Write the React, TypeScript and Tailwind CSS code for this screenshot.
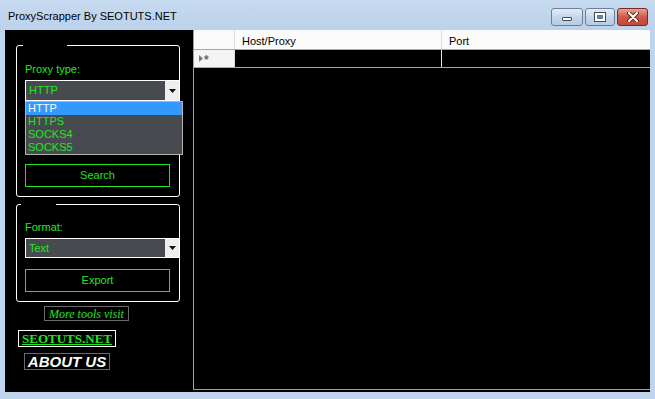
import React from "react";

const green = "text-[#22e622]";

function WinButtons() {
  return (
    <div className="ml-auto mr-[7px] mt-[8px] flex gap-[2px]">
      {/* minimize */}
      <div className="w-[32px] h-[18px] rounded-[3px] border border-[#6d7f96] bg-gradient-to-b from-[#e3ecf7] via-[#c6d6ea] to-[#b6cbe4] flex items-end justify-center pb-[4px]">
        <div className="w-[10px] h-[4px] bg-white border border-[#3c4a5c] rounded-[1px]" />
      </div>
      {/* maximize */}
      <div className="w-[30px] h-[18px] rounded-[3px] border border-[#6d7f96] bg-gradient-to-b from-[#e3ecf7] via-[#c6d6ea] to-[#b6cbe4] flex items-center justify-center">
        <div className="w-[10px] h-[8px] border-[2px] border-white outline outline-1 outline-[#3c4a5c] bg-[#6d7f96]" />
      </div>
      {/* close */}
      <div className="w-[31px] h-[18px] rounded-[3px] border border-[#7a2a22] bg-gradient-to-b from-[#e8a493] via-[#d0584a] to-[#c24a3a] flex items-center justify-center">
        <svg width="12" height="10" viewBox="0 0 12 10">
          <path d="M2 1 L10 9 M10 1 L2 9" stroke="#5a1f18" strokeWidth="4" strokeLinecap="round" />
          <path d="M2 1 L10 9 M10 1 L2 9" stroke="#ffffff" strokeWidth="2.2" strokeLinecap="round" />
        </svg>
      </div>
    </div>
  );
}

function Combo({ value, h, open }: { value: string; h: string; open?: boolean }) {
  return (
    <div className={`relative w-[155px] ${h} border border-white bg-[#474b4f] flex items-stretch`}>
      <span className={`flex-1 pl-[3px] text-[11px] flex items-center ${green}`}>{value}</span>
      <div className="w-[14px] bg-[#eeeeee] flex items-center justify-center">
        <svg width="7" height="4" viewBox="0 0 7 4">
          <path d="M0 0 H7 L3.5 4 Z" fill="#111" />
        </svg>
      </div>
      {open && (
        <div className="absolute left-[-1px] top-[20px] w-[158px] h-[54px] border border-[#b4b4b4] bg-[#474b4f] flex flex-col z-10">
          <div className="h-[13px] leading-[13px] text-[11px] pl-[2px] bg-[#3399ff] text-white">HTTP</div>
          <div className={`h-[13px] leading-[13px] text-[11px] pl-[2px] ${green}`}>HTTPS</div>
          <div className={`h-[13px] leading-[13px] text-[11px] pl-[2px] ${green}`}>SOCKS4</div>
          <div className={`h-[13px] leading-[13px] text-[11px] pl-[2px] ${green}`}>SOCKS5</div>
        </div>
      )}
    </div>
  );
}

function GreenButton({ label, mt }: { label: string; mt: string }) {
  return (
    <div className={`${mt} w-[145px] h-[23px] border border-[#1ee61e] bg-black flex items-center justify-center text-[11px] ${green}`}>
      {label}
    </div>
  );
}

function LeftPanel() {
  return (
    <div className="w-[188px] shrink-0 pl-[11px] pt-[15px] flex flex-col items-start">
      {/* proxy type group */}
      <div className="relative w-[164px] h-[152px] border border-white rounded-[3px] pl-[8px] pt-[17px] flex flex-col">
        <span className="absolute top-[-1px] left-[6px] w-[44px] h-[1px] bg-black" />
        <span className={`text-[11px] leading-[13px] ${green}`}>Proxy type:</span>
        <div className="mt-[4px]">
          <Combo value="HTTP" h="h-[21px]" open />
        </div>
        <GreenButton label="Search" mt="mt-[63px]" />
      </div>

      {/* format group */}
      <div className="relative mt-[7px] w-[164px] h-[98px] border border-white rounded-[3px] pl-[8px] pt-[16px] flex flex-col">
        <span className="absolute top-[-1px] left-[4px] w-[35px] h-[1px] bg-black" />
        <span className={`text-[11px] leading-[13px] ${green}`}>Format:</span>
        <div className="mt-[4px]">
          <Combo value="Text" h="h-[20px]" />
        </div>
        <GreenButton label="Export" mt="mt-[11px]" />
      </div>

      <div className={`mt-[4px] ml-[28px] w-[85px] h-[15px] border border-[#6a6a6a] flex items-center justify-center font-['Liberation_Serif',serif] italic text-[12px] leading-none ${green}`}>
        More tools visit
      </div>
      <div className={`mt-[9px] ml-[2px] w-[98px] h-[17px] border border-white flex items-center justify-center font-['Liberation_Serif',serif] font-bold text-[13px] leading-none underline ${green}`}>
        SEOTUTS.NET
      </div>
      <div className="mt-[6px] ml-[8px] w-[86px] h-[17px] border border-[#6a6a6a] flex items-center justify-center font-['Liberation_Sans',Arial,sans-serif] font-bold italic text-[15px] leading-none text-white">
        ABOUT US
      </div>
    </div>
  );
}

function Grid() {
  return (
    <div className="flex-1 h-[360px] border-l border-b border-[#a0a0a0] bg-black flex flex-col">
      <div className="h-[20px] flex bg-[#fbfbfb] border-b border-[#a8a8a8] text-[11px] text-black">
        <div className="w-[41px] border-r border-[#dcdcdc]" />
        <div className="w-[207px] border-r border-[#dcdcdc] pl-[7px] pt-[3px] flex items-center">Host/Proxy</div>
        <div className="flex-1 pl-[7px] pt-[3px] flex items-center">Port</div>
      </div>
      <div className="h-[18px] flex border-b border-[#a8a8a8]">
        <div className="w-[41px] bg-[#f4f4f4] border-r border-[#dcdcdc] flex items-center pl-[5px] gap-[1px] text-[#6a6a6a]">
          <svg width="4" height="7" viewBox="0 0 4 7">
            <path d="M0 0 L4 3.5 L0 7 Z" fill="#7a7a7a" />
          </svg>
          <span className="text-[12px] leading-none mt-[3px] font-bold">*</span>
        </div>
        <div className="w-[207px] border-r border-[#e8e8e8] bg-black" />
        <div className="flex-1 bg-black" />
      </div>
    </div>
  );
}

export default function App() {
  return (
    <div className="w-[655px] h-[399px] bg-[#bfd5ee] flex flex-col overflow-hidden font-['Liberation_Sans',Arial,sans-serif]">
      <div className="h-[30px] shrink-0 flex items-start bg-gradient-to-b from-[#c6daf0] to-[#bbd2eb]">
        <span className="ml-[8px] mt-[10px] text-[11px] leading-[13px] text-black">ProxyScrapper By SEOTUTS.NET</span>
        <WinButtons />
      </div>
      <div className="mx-[5px] h-[362px] shrink-0 bg-black flex">
        <LeftPanel />
        <Grid />
      </div>
    </div>
  );
}
